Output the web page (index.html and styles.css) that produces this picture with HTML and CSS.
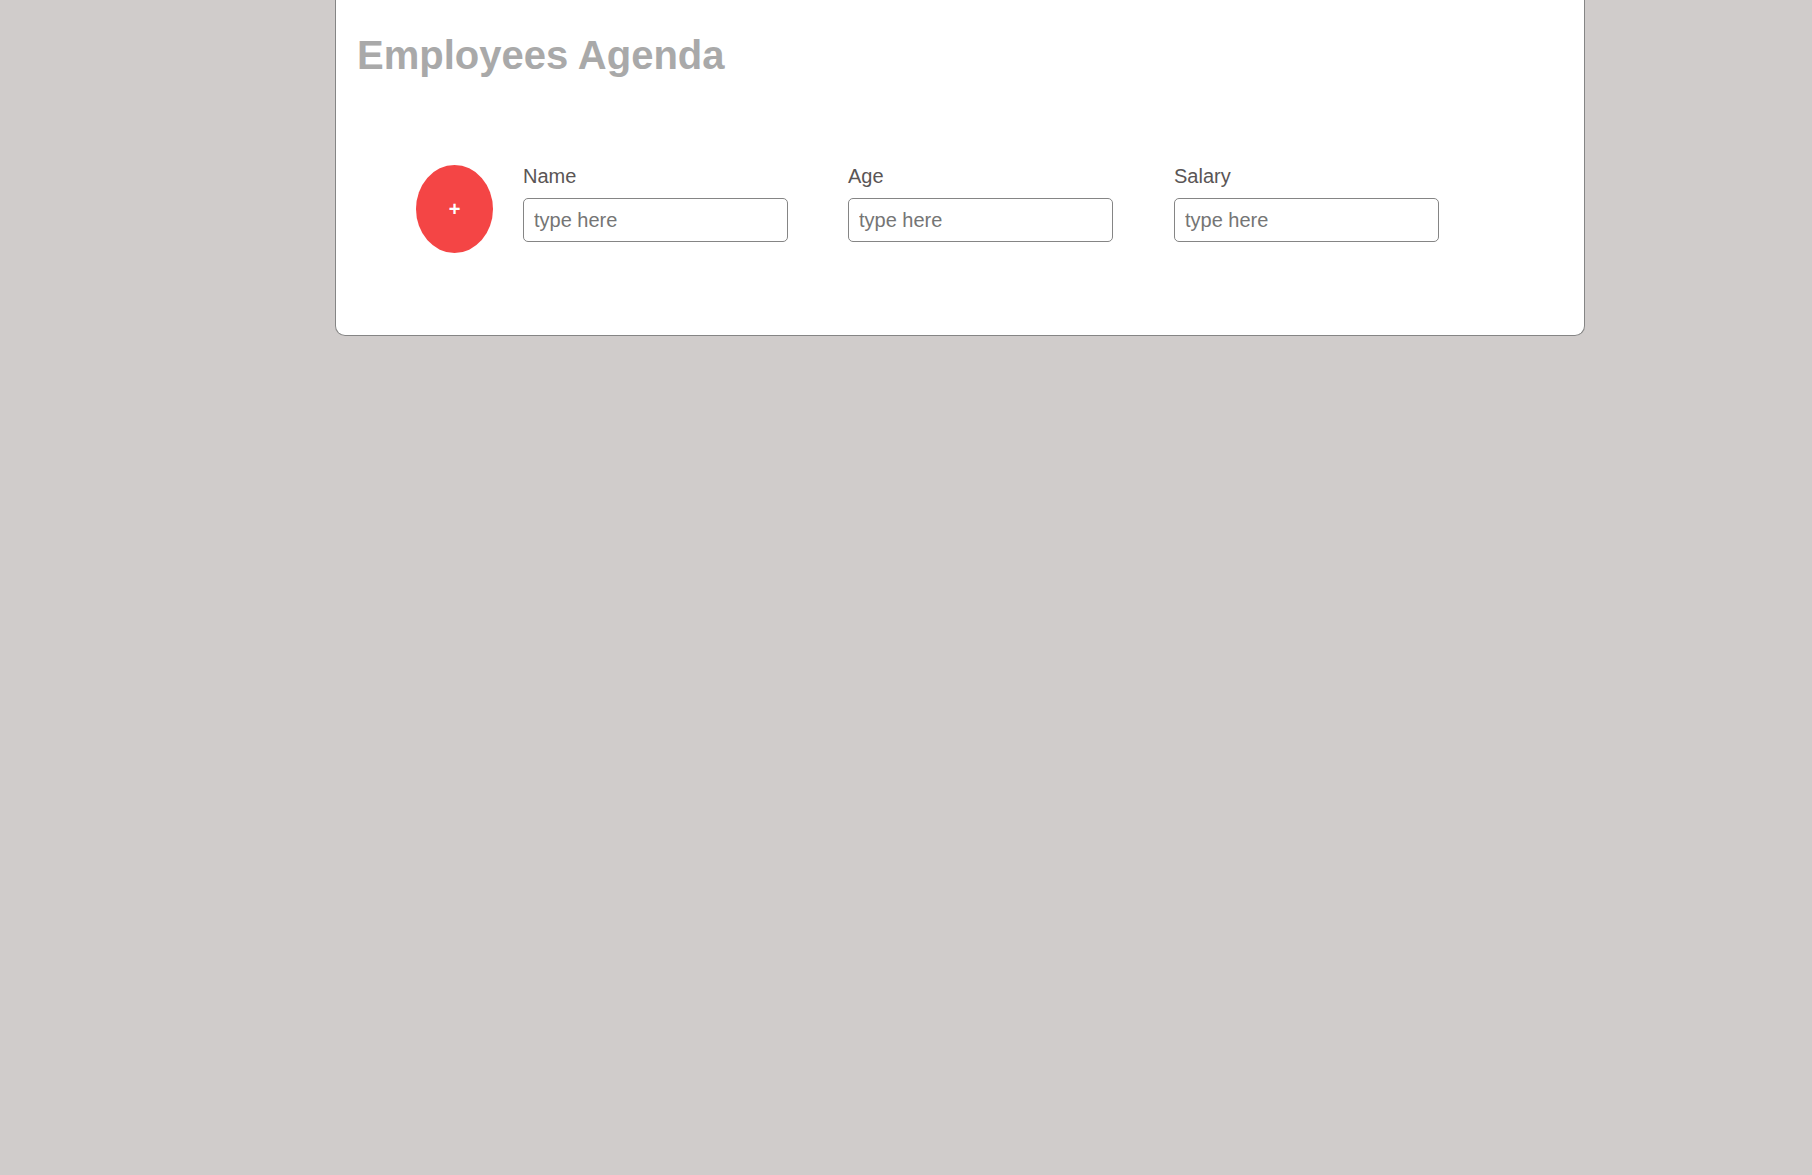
FILE: index.html
```html
<!DOCTYPE html>
<html>
<head>
<meta charset="utf-8">
<link rel="stylesheet" href="styles.css">
</head>
<body>
<div class="card">
  <h1 class="title">Employees Agenda</h1>
  <div class="form-row">
    <button class="add-btn">+</button>
    <div class="field">
      <label class="field-label">Name</label>
      <input class="field-input" type="text" placeholder="type here">
    </div>
    <div class="field">
      <label class="field-label">Age</label>
      <input class="field-input" type="text" placeholder="type here">
    </div>
    <div class="field">
      <label class="field-label">Salary</label>
      <input class="field-input" type="text" placeholder="type here">
    </div>
  </div>
</div>
</body>
</html>
```
FILE: styles.css
```css
html, body {
  margin: 0;
  padding: 0;
}
body {
  background: #d0cccb;
  font-family: "Liberation Sans", Arial, sans-serif;
  min-height: 1175px;
}
.card {
  box-sizing: border-box;
  margin-left: 335px;
  width: 1250px;
  height: 336px;
  background: #ffffff;
  border: 1px solid #858585;
  border-top: none;
  border-radius: 0 0 10px 10px;
  padding: 32px 21px 0;
}
.title {
  margin: 0;
  font-size: 40px;
  line-height: 46px;
  font-weight: bold;
  color: #a9a9a9;
}
.form-row {
  display: flex;
  align-items: flex-start;
  margin-top: 87px;
  padding-left: 59px;
}
.add-btn {
  width: 77px;
  height: 88px;
  margin-top: 0;
  margin-right: 30px;
  border: none;
  border-radius: 50%;
  background: #f44545;
  color: #ffffff;
  font-family: "Liberation Sans", Arial, sans-serif;
  font-size: 20px;
  font-weight: bold;
  padding: 0;
  display: flex;
  align-items: center;
  justify-content: center;
}
.field {
  display: flex;
  flex-direction: column;
  width: 265px;
  margin-right: 60px;
}
.field:nth-child(3) {
  margin-right: 61px;
}
.field-label {
  font-size: 20px;
  line-height: 23px;
  color: #5a5555;
  margin-bottom: 10px;
}
.field-input {
  box-sizing: border-box;
  width: 265px;
  height: 44px;
  border: 1px solid #858585;
  border-radius: 5px;
  padding: 0 10px;
  font-family: "Liberation Sans", Arial, sans-serif;
  font-size: 20px;
  color: #333;
  outline: none;
}
.field-input::placeholder {
  color: #757575;
}
```
